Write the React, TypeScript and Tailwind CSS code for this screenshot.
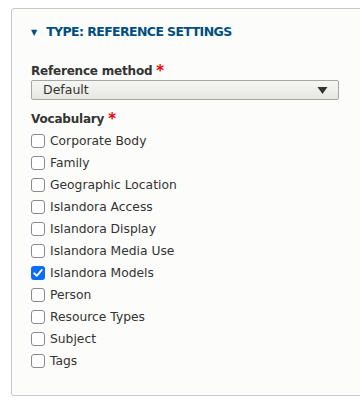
import React from 'react';

const vocabularies = [
  { name: 'Corporate Body', checked: false },
  { name: 'Family', checked: false },
  { name: 'Geographic Location', checked: false },
  { name: 'Islandora Access', checked: false },
  { name: 'Islandora Display', checked: false },
  { name: 'Islandora Media Use', checked: false },
  { name: 'Islandora Models', checked: true },
  { name: 'Person', checked: false },
  { name: 'Resource Types', checked: false },
  { name: 'Subject', checked: false },
  { name: 'Tags', checked: false },
];

function Checkbox({ checked }: { checked: boolean }) {
  if (checked) {
    return (
      <span className="w-[14px] h-[14px] rounded-[3px] bg-[#0b6cf5] flex items-center justify-center shrink-0">
        <svg viewBox="0 0 14 14" className="w-[14px] h-[14px]">
          <path d="M3.2 7.3 L5.8 9.9 L10.8 3.9" fill="none" stroke="white" strokeWidth="1.8" strokeLinecap="round" strokeLinejoin="round" />
        </svg>
      </span>
    );
  }
  return <span className="w-[14px] h-[14px] rounded-[3px] border-[1.5px] border-[#8a8891] bg-white shrink-0" />;
}

export default function App() {
  return (
    <div className="w-[360px] h-[402px] bg-white overflow-hidden pt-[8px] pl-[11px]" style={{ fontFamily: '"DejaVu Sans", Verdana, sans-serif' }}>
      <div className="w-[360px] h-[388px] bg-[#fcfcfa] border border-[#c8c8c8] rounded-tl-[3px] rounded-bl-[3px] pl-[19px] pt-[15px]">
        {/* Fieldset title */}
        <div className="flex items-center h-[16px] text-[#004f80] font-bold text-[12.5px] tracking-[-0.6px]">
          <span className="text-[8px] mr-[9px] mt-[1px] tracking-normal">▼</span>
          <span>TYPE: REFERENCE SETTINGS</span>
        </div>

        {/* Reference method */}
        <div className="mt-[22px] text-[12px] font-bold text-[#333] tracking-[-0.2px] flex items-center h-[17px]">
          Reference method
          <span className="text-[#e00] ml-[4px] text-[15px] leading-none mt-[2px]">*</span>
        </div>
        <div className="mt-[1px] w-[308px] h-[20px] border border-[#a6a6a6] rounded-[2px] bg-gradient-to-b from-[#f6f6f3] to-[#e7e7e2] flex items-center justify-between pl-[11px] pr-[10px]">
          <span className="text-[12.5px] text-[#333]">Default</span>
          <svg viewBox="0 0 10 7" className="w-[11px] h-[7px]">
            <path d="M0 0 L10 0 L5 7 Z" fill="#333" />
          </svg>
        </div>

        {/* Vocabulary */}
        <div className="mt-[10px] text-[12px] font-bold text-[#333] tracking-[-0.2px] flex items-center h-[17px]">
          Vocabulary
          <span className="text-[#e00] ml-[4px] text-[15px] leading-none mt-[2px]">*</span>
        </div>
        <div className="flex flex-col mt-[3px]">
          {vocabularies.map((v) => (
            <label key={v.name} className="flex items-center h-[22px] gap-[5px] text-[12.3px] text-[#333]">
              <Checkbox checked={v.checked} />
              <span>{v.name}</span>
            </label>
          ))}
        </div>
      </div>
    </div>
  );
}
